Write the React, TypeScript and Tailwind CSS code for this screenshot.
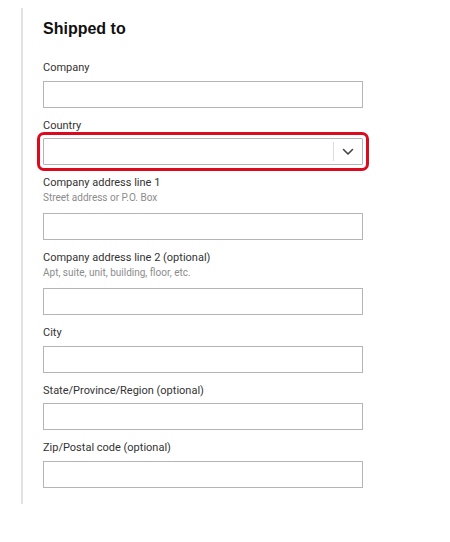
const fields: { label: string; hint?: string; select?: boolean }[] = [
  { label: "Company" },
  { label: "Country", select: true },
  { label: "Company address line 1", hint: "Street address or P.O. Box" },
  { label: "Company address line 2 (optional)", hint: "Apt, suite, unit, building, floor, etc." },
  { label: "City" },
  { label: "State/Province/Region (optional)" },
  { label: "Zip/Postal code (optional)" },
];

const Chevron = () => (
  <svg width="12" height="8" viewBox="0 0 12 8" fill="none">
    <path d="M1.5 1.5 L6 6 L10.5 1.5" stroke="#444" strokeWidth="1.6" strokeLinecap="round" strokeLinejoin="round" />
  </svg>
);

export default function App() {
  return (
    <div className="w-[450px] h-[542px] bg-white pt-2 pl-[21px] font-['Roboto','Liberation_Sans',sans-serif]">
      <div className="border-l-2 border-[#e2e2e2] pl-5 pt-[11px] pb-4">
        <h2 className="font-['Liberation_Sans',sans-serif] text-[16px] leading-5 font-bold text-[#111] mb-[21px]">
          Shipped to
        </h2>

        <div className="flex flex-col gap-[10px]">
          {fields.map((f) => (
            <div key={f.label} className="flex flex-col">
              <label className="text-[11px] leading-[15px] text-[#333]">{f.label}</label>
              {f.hint && <span className="text-[10px] leading-[14px] text-[#8c8c8c] mt-[1px]">{f.hint}</span>}
              <div className={f.hint ? "mt-2" : "mt-[5.5px]"}>
                {f.select ? (
                  <div className="w-[320px] h-[27px] border border-[#b5b5b5] rounded-[1px] flex outline-[3px] outline-offset-[3px] outline-[#dc0a1e] outline-solid">
                    <div className="flex-1" />
                    <div className="w-[29px] my-[3px] border-l border-[#dcdcdc] flex items-center justify-center">
                      <Chevron />
                    </div>
                  </div>
                ) : (
                  <input className="block w-[320px] h-[27px] border border-[#b5b5b5] bg-white outline-none" />
                )}
              </div>
            </div>
          ))}
        </div>
      </div>
    </div>
  );
}
